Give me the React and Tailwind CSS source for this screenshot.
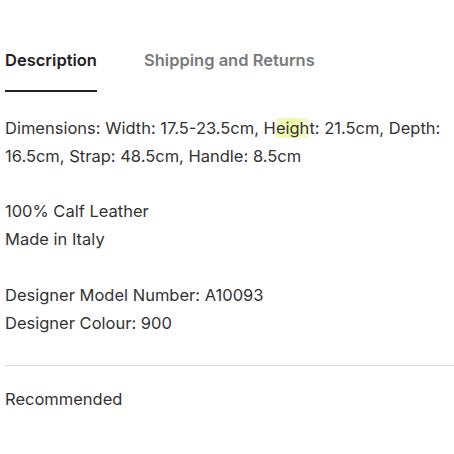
export default function App() {
  return (
    <div className="w-[454px] h-[454px] bg-white overflow-hidden text-[#2a2a2a]" style={{ fontFamily: "Inter, 'Noto Sans', sans-serif" }}>
      <div className="pl-[5px] pt-[48px]">
        <div className="flex items-start gap-[47px]">
          <div className="flex flex-col">
            <span className="text-[16.5px] leading-[24px] font-semibold text-[#222]">Description</span>
            <div className="mt-[18px] h-[2px] w-[92px] bg-[#222]" />
          </div>
          <span className="text-[16.5px] leading-[24px] font-semibold text-[#7a7a7a]">Shipping and Returns</span>
        </div>
        <div className="mt-[22px] text-[16.5px] leading-[28px] text-[#333]">
          <p>
            Dimensions: Width: 17.5-23.5cm, H<span className="bg-gradient-to-r from-[#f4fbc8] via-[#eef9a6] to-[#f6fcd4]">eigh</span>t: 21.5cm, Depth: 16.5cm, Strap: 48.5cm, Handle: 8.5cm
          </p>
          <p className="mt-[27px]">100% Calf Leather<br />Made in Italy</p>
          <p className="mt-[28px]">Designer Model Number: A10093<br />Designer Colour: 900</p>
        </div>
        <div className="mt-[28px] h-px bg-[#dedede]" />
        <div className="mt-[19px] text-[16.5px] leading-[28px] text-[#333]">Recommended</div>
      </div>
    </div>
  );
}
